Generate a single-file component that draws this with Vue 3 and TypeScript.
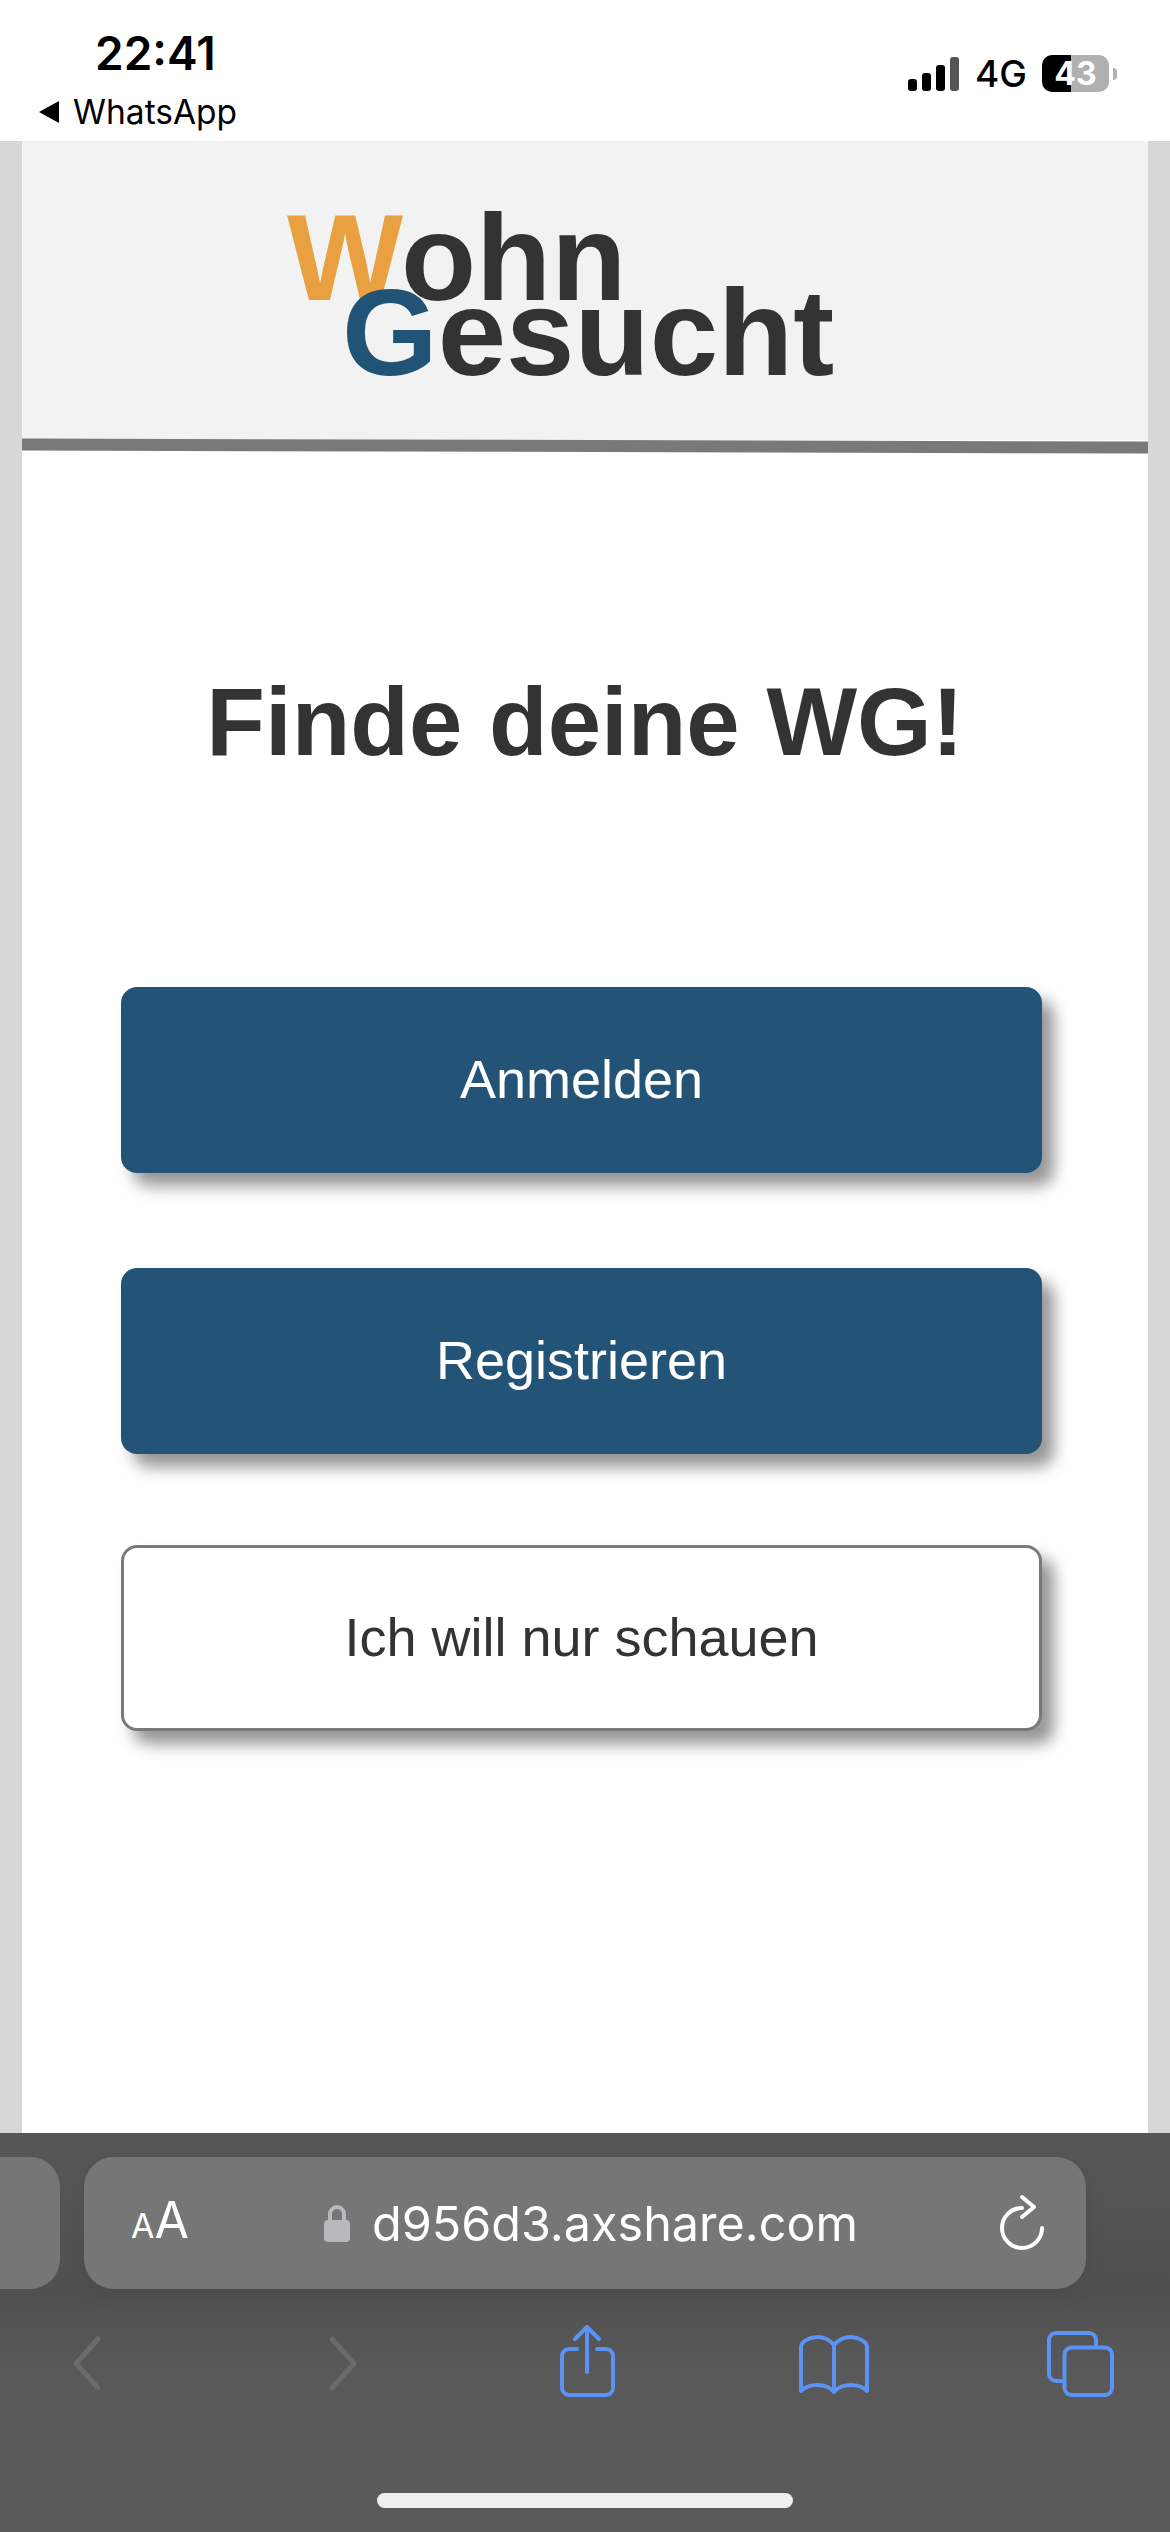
<script setup lang="ts">
  const actions = [
    { label: 'Anmelden', kind: 'primary' },
    { label: 'Registrieren', kind: 'primary' },
    { label: 'Ich will nur schauen', kind: 'outline' },
  ];
</script>

<template>
  <div class="phone">
    <header class="status">
      <div class="status-left">
        <div class="time">22:41</div>
        <div class="back">
          <svg class="back-arrow" width="24" height="24" viewBox="0 0 24 24">
            <path d="M22 1 V23 L2 12 Z" fill="#000" />
          </svg>
          <span>WhatsApp</span>
        </div>
      </div>
      <div class="status-right">
        <div class="signal">
          <i class="b1"></i><i class="b2"></i><i class="b3"></i><i class="b4"></i>
        </div>
        <span class="net">4G</span>
        <div class="battery"><span>43</span></div>
        <div class="battery-tip"></div>
      </div>
    </header>

    <main class="viewport">
      <div class="page">
        <div class="brand">
          <div class="logo">
            <div class="logo-line"><span class="w">W</span>ohn</div>
            <div class="logo-line second"><span class="g">G</span>esucht</div>
          </div>
        </div>
        <div class="rule"></div>
        <h1 class="title">Finde deine WG!</h1>
        <div class="actions">
          <button v-for="a in actions" :key="a.label" class="action" :class="a.kind">
            {{ a.label }}
          </button>
        </div>
      </div>
    </main>

    <footer class="chrome">
      <div class="address-row">
        <div class="prev-tab"></div>
        <div class="address">
          <span class="aa"><small>A</small>A</span>
          <svg class="lock" width="28" height="40" viewBox="0 0 28 40">
            <path d="M7 18 V11 a7 7 0 0 1 14 0 V18" fill="none" stroke="#b9b9bd" stroke-width="4" />
            <rect x="1" y="17" width="26" height="22" rx="4" fill="#b9b9bd" />
          </svg>
          <span class="url">d956d3.axshare.com</span>
          <svg class="reload" width="50" height="62" viewBox="0 0 50 62">
            <path d="M24 16 A20 20 0 1 0 44 36" fill="none" stroke="#fff" stroke-width="4" stroke-linecap="round" />
            <path d="M24 5 L36 15 L24 25" fill="none" stroke="#fff" stroke-width="4" stroke-linecap="round" stroke-linejoin="round" />
          </svg>
        </div>
      </div>
      <nav class="tools">
        <svg width="34" height="80" viewBox="0 0 34 80">
          <path d="M27 14 L5 38.5 L27 63" class="off" />
        </svg>
        <svg width="34" height="80" viewBox="0 0 34 80">
          <path d="M5 14 L27 38.5 L5 63" class="off" />
        </svg>
        <svg width="60" height="80" viewBox="0 0 60 80">
          <path d="M20 24 H12 a7 7 0 0 0 -7 7 V63 a7 7 0 0 0 7 7 H49 a7 7 0 0 0 7 -7 V31 a7 7 0 0 0 -7 -7 H40" class="on" />
          <path d="M30 47 V3 M18 14 L30 2 L42 14" class="on" />
        </svg>
        <svg width="74" height="80" viewBox="0 0 74 80">
          <path d="M4 66 V22 C4 16 14 12 20 12 C28 12 33 15 37 20 C41 15 46 12 54 12 C60 12 70 16 70 22 V66 C64 60 58 60 54 60 C47 60 41 62 37 67 C33 62 27 60 20 60 C16 60 10 60 4 66 Z M37 20 V67" class="on" />
        </svg>
        <svg width="70" height="80" viewBox="0 0 70 80">
          <path d="M18 56 H10 a7 7 0 0 1 -7 -7 V15 a7 7 0 0 1 7 -7 H43 a7 7 0 0 1 7 7 V22" class="on" />
          <rect x="18.5" y="22.5" width="47.5" height="47.5" rx="7" class="on" />
        </svg>
      </nav>
      <div class="home-bar"></div>
    </footer>
  </div>
</template>

<style scoped>
  .phone {
    width: 1170px;
    height: 2532px;
    display: flex;
    flex-direction: column;
    background: #fff;
    overflow: hidden;
  }

  .status {
    height: 141px;
    flex: none;
    display: flex;
    justify-content: space-between;
    font-family: Inter, 'Liberation Sans', sans-serif;
    color: #000;
  }
  .status-left {
    padding: 27px 0 0 37px;
  }
  .time {
    margin-left: 58px;
    font-size: 46px;
    line-height: 52px;
    font-weight: 600;
  }
  .back {
    display: flex;
    align-items: center;
    gap: 12px;
    margin-top: 13px;
    font-size: 33.5px;
    line-height: 40px;
  }
  .back-arrow {
    flex: none;
  }
  .status-right {
    display: flex;
    align-items: flex-start;
    padding: 55px 53px 0 0;
  }
  .signal {
    display: flex;
    align-items: flex-end;
    gap: 5px;
    height: 34px;
    margin-top: 2px;
  }
  .signal i {
    width: 9px;
    border-radius: 3px;
    background: #000;
  }
  .signal .b1 { height: 12px; }
  .signal .b2 { height: 18px; }
  .signal .b3 { height: 26px; }
  .signal .b4 { height: 34px; background: #555; }
  .net {
    margin-left: 16px;
    font-size: 37px;
    line-height: 37px;
    font-weight: 500;
  }
  .battery {
    width: 67px;
    height: 37px;
    margin-left: 15px;
    border-radius: 10px;
    background: linear-gradient(to right, #000 29px, #b0b0b0 29px);
    color: #fff;
    font-size: 32px;
    font-weight: 700;
    line-height: 37px;
    text-align: center;
  }
  .battery-tip {
    width: 4px;
    height: 12px;
    margin: 13px 0 0 4px;
    border-radius: 0 6px 6px 0;
    background: #b0b0b0;
  }

  .viewport {
    flex: 1;
    min-height: 0;
    padding: 0 22px;
    background: #d7d7d7;
  }
  .page {
    height: 100%;
    background: #fff;
    font-family: 'Liberation Sans', Arial, sans-serif;
    color: #333;
  }
  .brand {
    height: 299px;
    background: #f2f2f2;
    padding: 79px 0 0 265px;
    box-sizing: border-box;
  }
  .logo-line {
    font-size: 123px;
    font-weight: 700;
    line-height: 75px;
    white-space: nowrap;
  }
  .logo-line.second {
    margin-left: 55px;
  }
  .w { color: #e9a040; }
  .g { color: #215377; }
  .rule {
    height: 12px;
    background: #797979;
    transform: rotate(0.15deg);
  }

  .title {
    margin: 0;
    padding-top: 215px;
    font-size: 96px;
    line-height: 110px;
    font-weight: 700;
    text-align: center;
  }

  .actions {
    display: flex;
    flex-direction: column;
    gap: 95px;
    width: 921px;
    margin: 210px 0 0 99px;
  }
  .action {
    height: 186px;
    box-sizing: border-box;
    padding: 0 0 2px;
    border: none;
    border-radius: 16px;
    font-family: inherit;
    font-size: 54px;
    box-shadow: 12px 13px 16px rgba(0, 0, 0, 0.42);
  }
  .primary {
    background: #235478;
    color: #fff;
  }
  .outline {
    margin-top: -4px;
    background: #fff;
    border: 3px solid #797979;
    color: #333;
  }

  .chrome {
    height: 399px;
    flex: none;
    position: relative;
    background: linear-gradient(to bottom, #575757 0, #505050 160px, #595959 240px);
    font-family: Inter, 'Liberation Sans', sans-serif;
  }
  .address-row {
    display: flex;
    gap: 24px;
    padding-top: 24px;
  }
  .prev-tab {
    width: 60px;
    height: 132px;
    border-radius: 0 30px 30px 0;
    background: #767676;
  }
  .address {
    width: 1002px;
    height: 132px;
    display: flex;
    align-items: center;
    padding: 0 38px 0 47px;
    box-sizing: border-box;
    border-radius: 30px;
    background: #767676;
    color: #fff;
    box-shadow: 0 6px 20px rgba(0, 0, 0, 0.08);
  }
  .aa {
    font-size: 50px;
    line-height: 50px;
  }
  .aa small {
    font-size: 34px;
  }
  .lock {
    margin-left: 134px;
    flex: none;
  }
  .url {
    margin-left: 21px;
    font-size: 48.5px;
    white-space: nowrap;
  }
  .reload {
    margin-left: auto;
    flex: none;
  }

  .tools {
    display: grid;
    grid-template-columns: 256px 230px 240px 249px 70px;
    padding: 36px 0 0 71px;
  }
  .tools svg {
    display: block;
  }
  .on {
    fill: none;
    stroke: #5b93f5;
    stroke-width: 4;
    stroke-linecap: round;
    stroke-linejoin: round;
  }
  .off {
    fill: none;
    stroke: #6b6b6b;
    stroke-width: 5;
    stroke-linecap: round;
    stroke-linejoin: round;
  }

  .home-bar {
    position: absolute;
    left: 377px;
    top: 360px;
    width: 416px;
    height: 15px;
    border-radius: 8px;
    background: #eee;
  }
</style>
